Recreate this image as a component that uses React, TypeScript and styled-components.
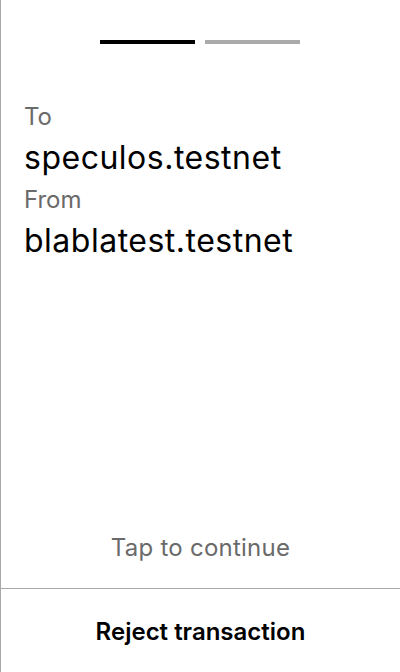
import styled, { createGlobalStyle } from "styled-components";

const GlobalStyle = createGlobalStyle`
  html, body {
    margin: 0;
    padding: 0;
    background: #ffffff;
  }
  body {
    font-family: Inter, "Noto Sans", sans-serif;
    -webkit-font-smoothing: antialiased;
  }
`;

const fields = [
  { label: "To", value: "speculos.testnet" },
  { label: "From", value: "blablatest.testnet" },
];

export default function App() {
  return (
    <>
      <GlobalStyle />
      <Screen>
        <Progress>
          <Bar active />
          <Bar />
        </Progress>
        <Content>
          {fields.map((f) => (
            <Field key={f.label}>
              <Label>{f.label}</Label>
              <Value>{f.value}</Value>
            </Field>
          ))}
        </Content>
        <Hint>Tap to continue</Hint>
        <Footer>
          <RejectButton>Reject transaction</RejectButton>
        </Footer>
      </Screen>
    </>
  );
}

const Screen = styled.div`
  width: 400px;
  height: 672px;
  box-sizing: border-box;
  border-left: 1px solid #a8a8a8;
  display: flex;
  flex-direction: column;
  background: #ffffff;
`;

const Progress = styled.div`
  display: flex;
  justify-content: center;
  gap: 10px;
  padding-top: 40px;
  margin-left: -1px;
`;

const Bar = styled.div<{ active?: boolean }>`
  width: 95px;
  height: 4px;
  background: ${(p) => (p.active ? "#000000" : "#aaaaaa")};
`;

const Content = styled.div`
  flex: 1;
  padding: 57px 0 0 23px;
  display: flex;
  flex-direction: column;
  gap: 6px;
`;

const Field = styled.div`
  display: flex;
  flex-direction: column;
`;

const Label = styled.div`
  font-size: 24px;
  line-height: 32px;
  color: #6a6a6a;
`;

const Value = styled.div`
  font-size: 32px;
  line-height: 40px;
  letter-spacing: 0.5px;
  margin-top: 5px;
  color: #000000;
`;

const Hint = styled.div`
  text-align: center;
  font-size: 24px;
  line-height: 32px;
  letter-spacing: 0.25px;
  color: #6a6a6a;
  padding-bottom: 24px;
`;

const Footer = styled.div`
  height: 84px;
  box-sizing: border-box;
  border-top: 1px solid #a8a8a8;
  display: flex;
  align-items: center;
  justify-content: center;
`;

const RejectButton = styled.div`
  font-size: 24px;
  font-weight: 600;
  color: #000000;
  padding-top: 2px;
`;
